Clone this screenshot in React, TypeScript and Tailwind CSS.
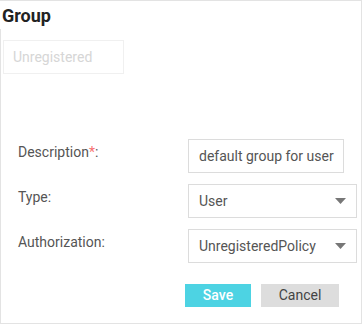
export default function App() {
  return (
    <div className="h-[325px] w-[362px] bg-white font-['Roboto',sans-serif] text-[#555]">
      <div className="flex h-[324px] flex-col border-t border-r border-b border-[#e3e3e3]">
        <h1 className="pl-[2px] pt-[2px] text-[18px] leading-[26px] font-bold text-[#222]">Group</h1>
        <div className="flex flex-1 flex-col border-l border-[#e3e3e3]">
          <div className="ml-[2px] mt-[11px] flex h-[34px] w-[121px] items-center border border-[#f0f0f0] pl-[9px] text-[14px] text-[#d6d6d6]">
            Unregistered
          </div>

          <div className="mt-[65px] flex flex-col gap-[11px]">
            <div className="flex">
              <div className="w-[187px] pl-[17px] pt-[3px] text-[14px] leading-[20px] text-[#555]">
                Description<span className="text-[#f87171]">*</span>:
              </div>
              <div className="flex h-[34px] w-[156px] items-center border border-[#dcdcdc] pl-[10px] text-[14px] text-[#555]">
                default group for user
              </div>
            </div>
            <div className="flex">
              <div className="w-[187px] pl-[17px] pt-[3px] text-[14px] leading-[20px]">Type:</div>
              <SelectBox value="User" />
            </div>
            <div className="flex">
              <div className="w-[187px] pl-[17px] pt-[3px] text-[14px] leading-[20px]">Authorization:</div>
              <SelectBox value="UnregisteredPolicy" />
            </div>
          </div>

          <div className="mt-[21px] flex gap-[10px] pl-[184px]">
            <button className="h-[23px] w-[66px] bg-[#4dd3e3] text-[14px] font-medium text-white">Save</button>
            <button className="h-[23px] w-[78px] bg-[#dddddd] text-[14px] text-[#444]">Cancel</button>
          </div>
        </div>
      </div>
    </div>
  );
}

function SelectBox({ value }: { value: string }) {
  return (
    <div className="flex h-[34px] w-[169px] items-center justify-between border border-[#dcdcdc] pl-[10px] pr-[10px] text-[14px] text-[#555]">
      <span>{value}</span>
      <svg width="11" height="6" viewBox="0 0 11 6">
        <path d="M0 0 L11 0 L5.5 6 Z" fill="#777" />
      </svg>
    </div>
  );
}
